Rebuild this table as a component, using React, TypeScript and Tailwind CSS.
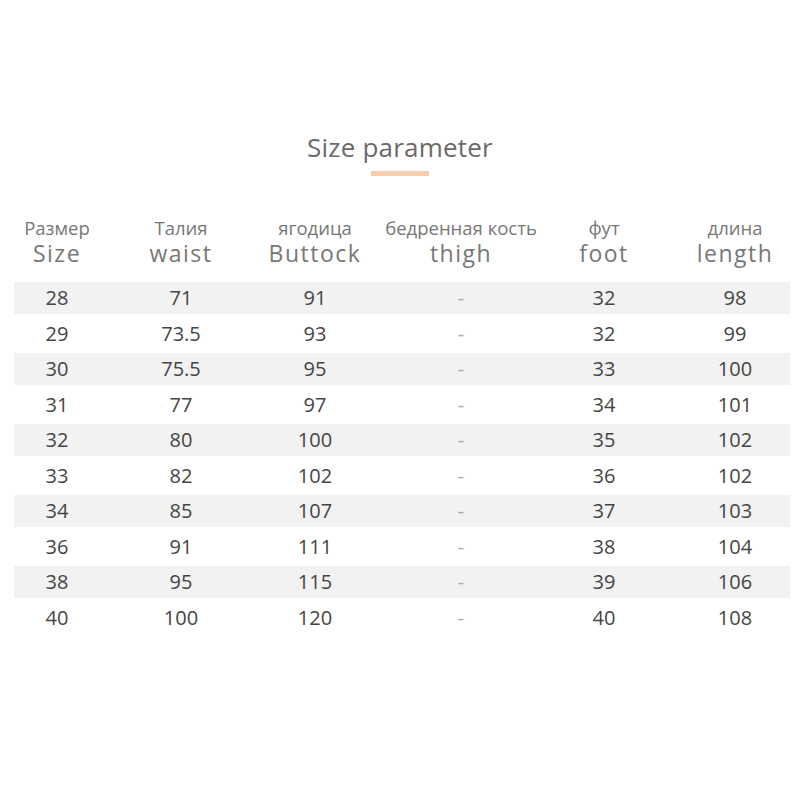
const rows = [
  ['28', '71', '91', '-', '32', '98'],
  ['29', '73.5', '93', '-', '32', '99'],
  ['30', '75.5', '95', '-', '33', '100'],
  ['31', '77', '97', '-', '34', '101'],
  ['32', '80', '100', '-', '35', '102'],
  ['33', '82', '102', '-', '36', '102'],
  ['34', '85', '107', '-', '37', '103'],
  ['36', '91', '111', '-', '38', '104'],
  ['38', '95', '115', '-', '39', '106'],
  ['40', '100', '120', '-', '40', '108'],
];

const headers = [
  ['Размер', 'Size'],
  ['Талия', 'waist'],
  ['ягодица', 'Buttock'],
  ['бедренная кость', 'thigh'],
  ['фут', 'foot'],
  ['длина', 'length'],
];

const cols = 'grid grid-cols-[86px_162px_106px_186px_100px_162px]';

export default function App() {
  return (
    <div className="w-[800px] h-[800px] bg-white overflow-hidden font-['Open_Sans','Noto_Sans',sans-serif]">
      <div className="pt-[131px] flex flex-col items-center">
        <h1 className="text-[26px] leading-[32px] text-[#6a6a6a] tracking-[0.2px]">Size parameter</h1>
        <div className="mt-[8px] w-[58px] h-[5px] bg-[#f8cdac]" />
      </div>

      {/* header */}
      <div className={`${cols} mx-[14px] w-[776px] mt-[41px] text-[#777]`}>
        {headers.map(([ru, en]) => (
          <div key={en} className="flex flex-col items-center whitespace-nowrap">
            <span className="text-[18.5px] leading-[22px]">{ru}</span>
            <span className="text-[23px] leading-[28px] tracking-[1.5px]">{en}</span>
          </div>
        ))}
      </div>

      {/* rows */}
      <div className="mt-[15px] flex flex-col">
        {rows.map((r, i) => (
          <div
            key={r[0]}
            className={`${cols} mx-[14px] w-[776px] items-center text-[20px] text-[#454545] ${
              i % 2 === 0 ? 'bg-[#f2f2f2] h-[32px]' : 'h-[39px]'
            }`}
          >
            {r.map((v, j) => (
              <span key={j} className={`text-center ${v === '-' ? 'text-[#aaa]' : ''}`}>
                {v}
              </span>
            ))}
          </div>
        ))}
      </div>
    </div>
  );
}
